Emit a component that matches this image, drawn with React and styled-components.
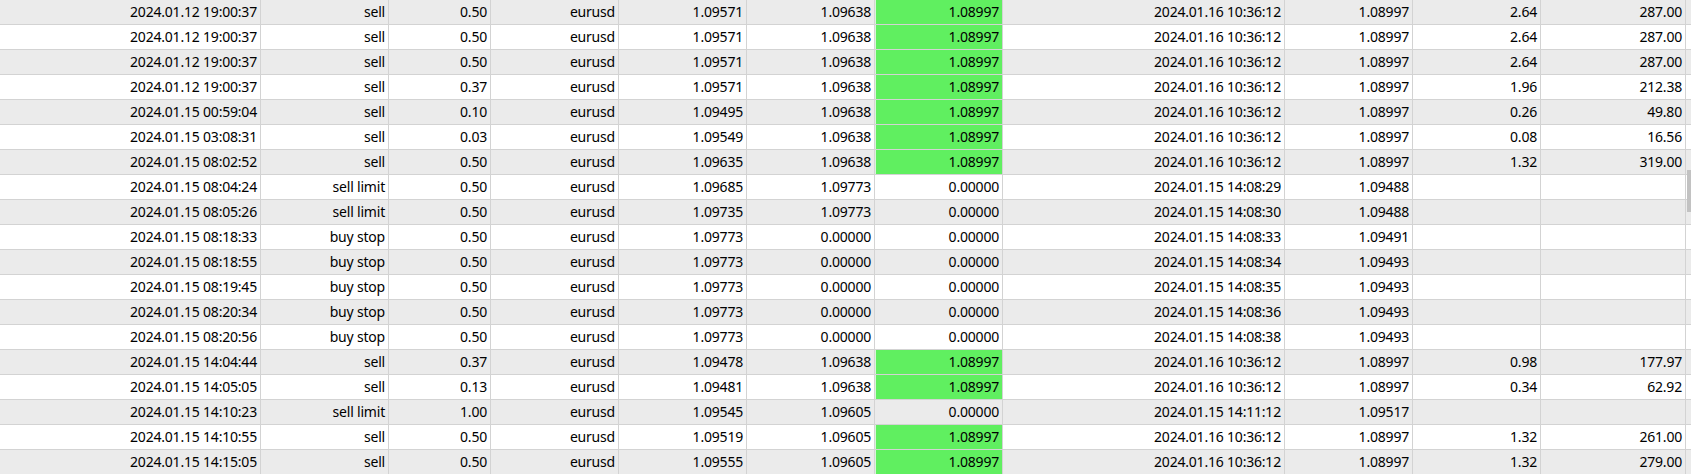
import React from "react";
import styled, { createGlobalStyle } from "styled-components";

const GlobalStyle = createGlobalStyle`
  html, body {
    margin: 0;
    padding: 0;
    background: #ffffff;
  }
  body {
    font-family: "Noto Sans", "Open Sans", Arial, sans-serif;
    overflow: hidden;
  }
`;

const Viewport = styled.div`
  position: relative;
  width: 1691px;
  height: 474px;
  overflow: hidden;
  background: #ffffff;
`;

const Grid = styled.div`
  display: flex;
  flex-direction: column;
`;

const Row = styled.div`
  display: grid;
  grid-template-columns: 261px 128px 102px 128px 128px 128px 128px 282px 128px 128px 145px 1fr;
  height: 25px;
  box-sizing: border-box;
  border-bottom: 1px solid #d3d3d3;
  background: ${(p) => (p.$odd ? "#ffffff" : "#ebebeb")};
`;

const Cell = styled.div`
  box-sizing: border-box;
  height: 24px;
  line-height: 24px;
  padding-right: 3px;
  text-align: right;
  font-size: 14px;
  letter-spacing: -0.2px;
  color: #000000;
  white-space: nowrap;
  overflow: hidden;
  border-right: ${(p) => (p.$last ? "none" : "1px solid #d3d3d3")};
  background: ${(p) => (p.$hit ? "#60ef60" : "transparent")};
  box-shadow: ${(p) => (p.$hit ? "inset 1px 0 0 #d8f5d8" : "none")};
`;

const ScrollThumb = styled.div`
  position: absolute;
  left: 1687px;
  top: 170px;
  width: 4px;
  height: 42px;
  background: #c2c2c2;
`;

const filled = (open, type, vol, op, sl, close, closeTime, price, pips, profit) => ({
  open, type, vol, op, sl, close, closeTime, price, pips, profit,
});

const T16 = "2024.01.16 10:36:12";
const C = "1.08997";

const rows = [
  filled("2024.01.12 19:00:37", "sell", "0.50", "1.09571", "1.09638", C, T16, C, "2.64", "287.00"),
  filled("2024.01.12 19:00:37", "sell", "0.50", "1.09571", "1.09638", C, T16, C, "2.64", "287.00"),
  filled("2024.01.12 19:00:37", "sell", "0.50", "1.09571", "1.09638", C, T16, C, "2.64", "287.00"),
  filled("2024.01.12 19:00:37", "sell", "0.37", "1.09571", "1.09638", C, T16, C, "1.96", "212.38"),
  filled("2024.01.15 00:59:04", "sell", "0.10", "1.09495", "1.09638", C, T16, C, "0.26", "49.80"),
  filled("2024.01.15 03:08:31", "sell", "0.03", "1.09549", "1.09638", C, T16, C, "0.08", "16.56"),
  filled("2024.01.15 08:02:52", "sell", "0.50", "1.09635", "1.09638", C, T16, C, "1.32", "319.00"),
  filled("2024.01.15 08:04:24", "sell limit", "0.50", "1.09685", "1.09773", "0.00000", "2024.01.15 14:08:29", "1.09488", "", ""),
  filled("2024.01.15 08:05:26", "sell limit", "0.50", "1.09735", "1.09773", "0.00000", "2024.01.15 14:08:30", "1.09488", "", ""),
  filled("2024.01.15 08:18:33", "buy stop", "0.50", "1.09773", "0.00000", "0.00000", "2024.01.15 14:08:33", "1.09491", "", ""),
  filled("2024.01.15 08:18:55", "buy stop", "0.50", "1.09773", "0.00000", "0.00000", "2024.01.15 14:08:34", "1.09493", "", ""),
  filled("2024.01.15 08:19:45", "buy stop", "0.50", "1.09773", "0.00000", "0.00000", "2024.01.15 14:08:35", "1.09493", "", ""),
  filled("2024.01.15 08:20:34", "buy stop", "0.50", "1.09773", "0.00000", "0.00000", "2024.01.15 14:08:36", "1.09493", "", ""),
  filled("2024.01.15 08:20:56", "buy stop", "0.50", "1.09773", "0.00000", "0.00000", "2024.01.15 14:08:38", "1.09493", "", ""),
  filled("2024.01.15 14:04:44", "sell", "0.37", "1.09478", "1.09638", C, T16, C, "0.98", "177.97"),
  filled("2024.01.15 14:05:05", "sell", "0.13", "1.09481", "1.09638", C, T16, C, "0.34", "62.92"),
  filled("2024.01.15 14:10:23", "sell limit", "1.00", "1.09545", "1.09605", "0.00000", "2024.01.15 14:11:12", "1.09517", "", ""),
  filled("2024.01.15 14:10:55", "sell", "0.50", "1.09519", "1.09605", C, T16, C, "1.32", "261.00"),
  filled("2024.01.15 14:15:05", "sell", "0.50", "1.09555", "1.09605", C, T16, C, "1.32", "279.00"),
];

export default function App() {
  return (
    <>
      <GlobalStyle />
      <Viewport>
        <Grid>
          {rows.map((r, i) => (
            <Row key={i} $odd={i % 2 === 1}>
              <Cell>{r.open}</Cell>
              <Cell>{r.type}</Cell>
              <Cell>{r.vol}</Cell>
              <Cell>eurusd</Cell>
              <Cell>{r.op}</Cell>
              <Cell>{r.sl}</Cell>
              <Cell $hit={r.close !== "0.00000"}>{r.close}</Cell>
              <Cell>{r.closeTime}</Cell>
              <Cell>{r.price}</Cell>
              <Cell>{r.pips}</Cell>
              <Cell>{r.profit}</Cell>
              <Cell $last />
            </Row>
          ))}
        </Grid>
        <ScrollThumb />
      </Viewport>
    </>
  );
}
